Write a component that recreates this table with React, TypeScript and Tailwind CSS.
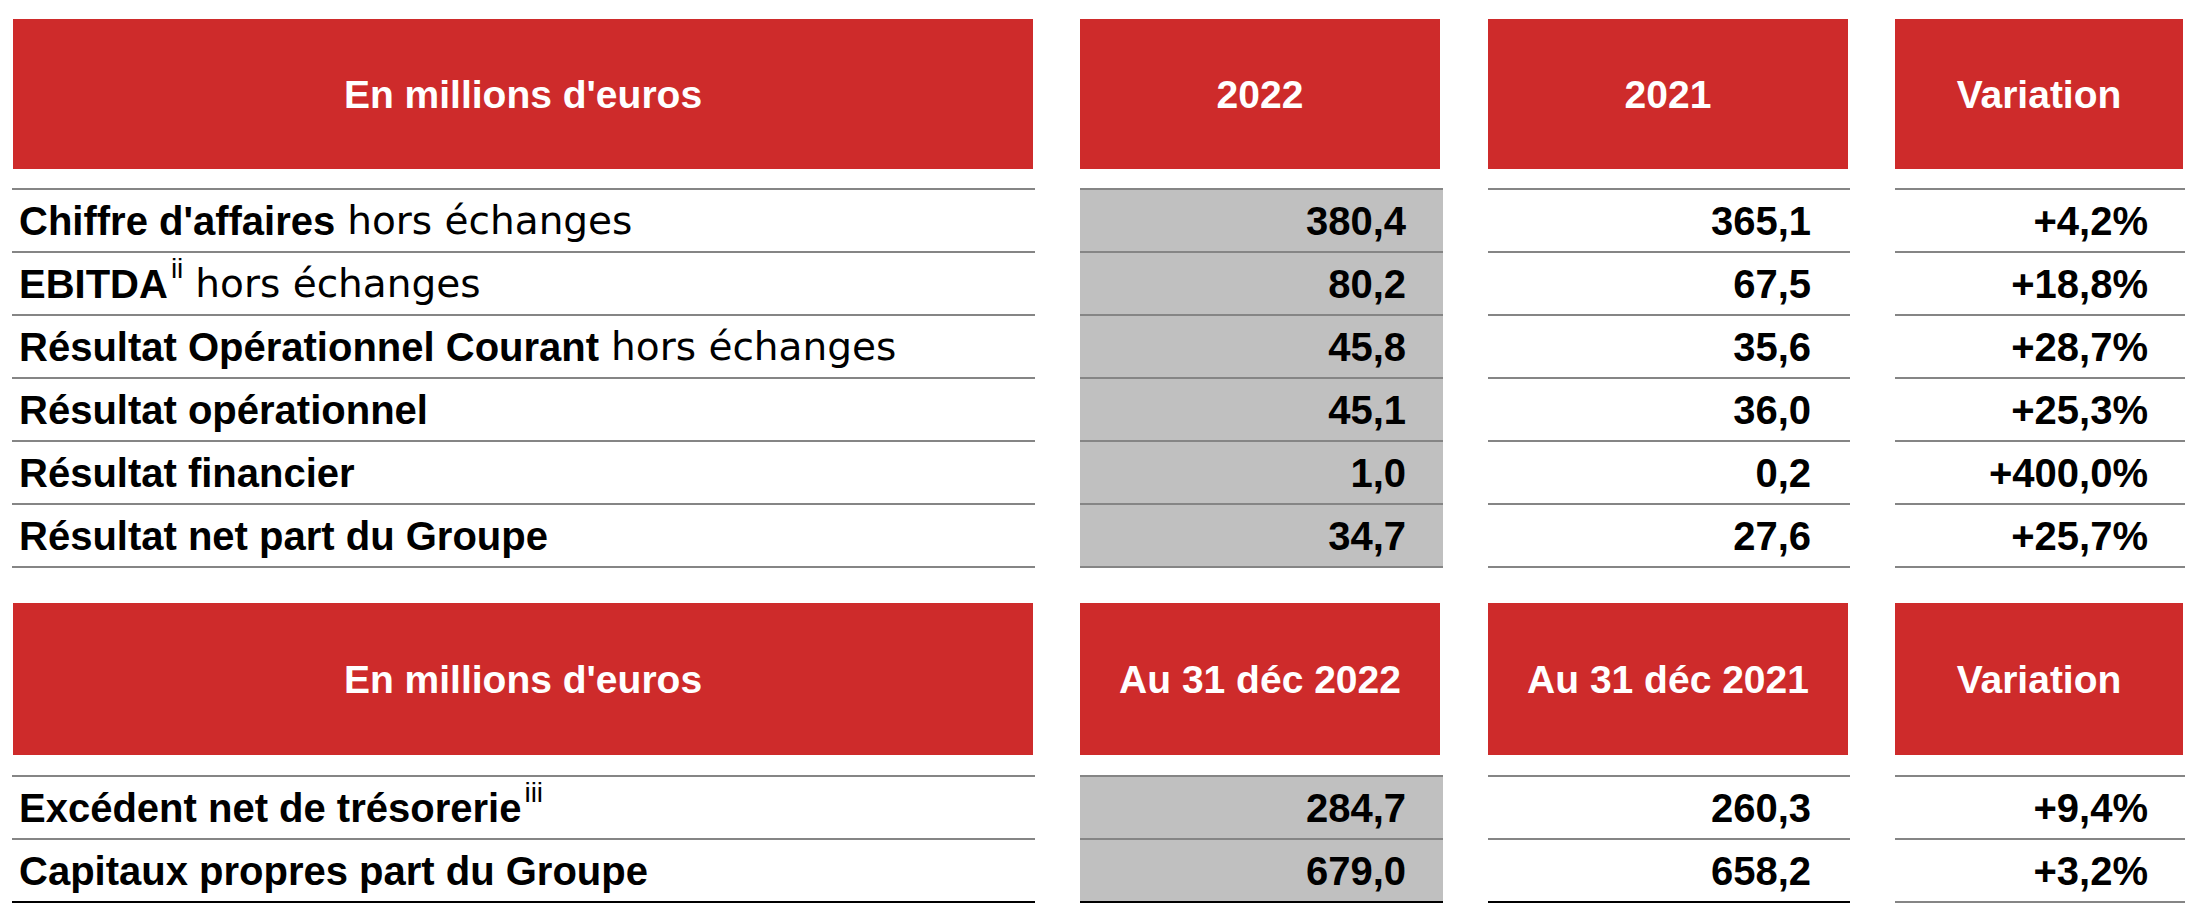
type Row = {
  bold: string;
  sup?: string;
  light?: string;
  values: [string, string, string];
};

const income: Row[] = [
  { bold: "Chiffre d'affaires", light: "hors échanges", values: ["380,4", "365,1", "+4,2%"] },
  { bold: "EBITDA", sup: "ii", light: "hors échanges", values: ["80,2", "67,5", "+18,8%"] },
  { bold: "Résultat Opérationnel Courant", light: "hors échanges", values: ["45,8", "35,6", "+28,7%"] },
  { bold: "Résultat opérationnel", values: ["45,1", "36,0", "+25,3%"] },
  { bold: "Résultat financier", values: ["1,0", "0,2", "+400,0%"] },
  { bold: "Résultat net part du Groupe", values: ["34,7", "27,6", "+25,7%"] },
];

const balance: Row[] = [
  { bold: "Excédent net de trésorerie", sup: "iii", values: ["284,7", "260,3", "+9,4%"] },
  { bold: "Capitaux propres part du Groupe", values: ["679,0", "658,2", "+3,2%"] },
];

function Header({ label, className }: { label: string; className: string }) {
  return (
    <div
      className={`flex items-center justify-center bg-[#ce2b2b] text-[39px] font-bold leading-none text-white ${className}`}
    >
      {label}
    </div>
  );
}

function Table({
  headers,
  rows,
  headerH,
  gapBelow,
  lastLines,
}: {
  headers: [string, string, string, string];
  rows: Row[];
  headerH: string;
  gapBelow: string;
  lastLines: [string, string, string, string];
}) {
  const cell = "h-[63px] border-t-2 border-[#858585] flex items-center";
  return (
    <div className="grid grid-cols-[1023px_363px_362px_290px] gap-x-[45px]">
      <Header label={headers[0]} className={`${headerH} ${gapBelow} ml-[1px] mr-[2px]`} />
      <Header label={headers[1]} className={`${headerH} ${gapBelow} mr-[3px]`} />
      <Header label={headers[2]} className={`${headerH} ${gapBelow} mr-[2px]`} />
      <Header label={headers[3]} className={`${headerH} ${gapBelow} mr-[2px]`} />

      {rows.map((r) => (
        <div key={r.bold} className="contents">
          <div className={`${cell} pl-[7px] text-[40px] leading-none text-black`}>
            <span className="font-bold">{r.bold}</span>
            {r.sup && (
              <span className="relative -top-[15px] ml-[3px] text-[28px] font-normal">{r.sup}</span>
            )}
            {r.light && (
              <span className="ml-[12px] font-['DejaVu_Sans',sans-serif] text-[39px] font-normal">
                {r.light}
              </span>
            )}
          </div>
          <div className={`${cell} justify-end bg-[#c0c0c0] pr-[37px] text-[40px] font-bold leading-none`}>
            {r.values[0]}
          </div>
          <div className={`${cell} justify-end pr-[39px] text-[40px] font-bold leading-none`}>
            {r.values[1]}
          </div>
          <div className={`${cell} justify-end pr-[37px] text-[40px] font-bold leading-none`}>
            {r.values[2]}
          </div>
        </div>
      ))}

      {lastLines.map((c, i) => (
        <div key={i} className={`h-[2px] ${c}`} />
      ))}
    </div>
  );
}

export default function App() {
  return (
    <div className="min-h-[920px] w-[2200px] bg-white pl-[12px] pt-[19px] font-['Liberation_Sans',Arial,sans-serif] text-black">
      <Table
        headers={["En millions d'euros", "2022", "2021", "Variation"]}
        rows={income}
        headerH="h-[150px]"
        gapBelow="mb-[19px]"
        lastLines={["bg-[#858585]", "bg-[#858585]", "bg-[#858585]", "bg-[#858585]"]}
      />
      <div className="mt-[35px]">
        <Table
          headers={["En millions d'euros", "Au 31 déc 2022", "Au 31 déc 2021", "Variation"]}
          rows={balance}
          headerH="h-[152px]"
          gapBelow="mb-[20px]"
          lastLines={["bg-black", "bg-black", "bg-black", "bg-[#858585]"]}
        />
      </div>
    </div>
  );
}
